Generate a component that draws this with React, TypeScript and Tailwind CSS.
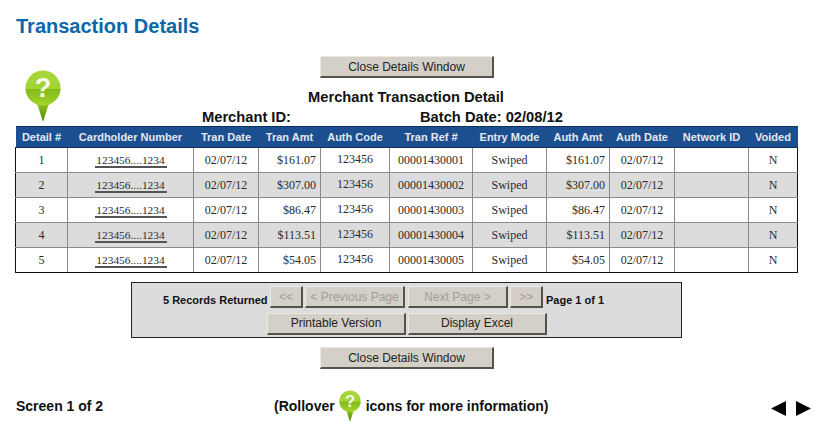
import React from 'react';

const rows = [
  { id: 1, ref: '00001430001', amt: '$161.07' },
  { id: 2, ref: '00001430002', amt: '$307.00' },
  { id: 3, ref: '00001430003', amt: '$86.47' },
  { id: 4, ref: '00001430004', amt: '$113.51' },
  { id: 5, ref: '00001430005', amt: '$54.05' },
];

const headers = ['Detail #', 'Cardholder Number', 'Tran Date', 'Tran Amt', 'Auth Code', 'Tran Ref #', 'Entry Mode', 'Auth Amt', 'Auth Date', 'Network ID', 'Voided'];
const widths = [52, 126, 65, 62, 69, 83, 74, 63, 65, 74, 49];

const Pin = ({ id, className }: { id: string; className: string }) => (
  <svg viewBox="0 0 36 52" className={className}>
    <defs>
      <linearGradient id={`${id}-top`} x1="0" y1="0" x2="0" y2="1">
        <stop offset="0" stopColor="#a8d83c" />
        <stop offset="1" stopColor="#9ccf2c" />
      </linearGradient>
      <linearGradient id={`${id}-bot`} x1="0" y1="0" x2="0" y2="1">
        <stop offset="0" stopColor="#5f9c08" />
        <stop offset="1" stopColor="#a2d42a" />
      </linearGradient>
      <linearGradient id={`${id}-tip`} x1="0" y1="0" x2="0" y2="1">
        <stop offset="0" stopColor="#8cc41c" />
        <stop offset="1" stopColor="#4f8a06" />
      </linearGradient>
      <clipPath id={`${id}-clip`}>
        <rect x="0" y="19" width="36" height="17" />
      </clipPath>
    </defs>
    <path d="M12 33 L18 52 L24 33 Z" fill={`url(#${id}-tip)`} />
    <circle cx="18" cy="18" r="17.5" fill={`url(#${id}-top)`} />
    <circle cx="18" cy="18" r="17.5" fill={`url(#${id}-bot)`} clipPath={`url(#${id}-clip)`} />
    <text x="18" y="27" textAnchor="middle" fontSize="27" fontWeight="700" fill="#f6f9ec" fontFamily="'Liberation Sans', sans-serif">?</text>
  </svg>
);

const Btn = ({ children, disabled, className }: { children: React.ReactNode; disabled?: boolean; className: string }) => (
  <div
    className={`flex items-center justify-center h-[22px] bg-[#d4d0c8] border-t border-l border-t-[#ece9e2] border-l-[#ece9e2] border-r-2 border-b-2 border-r-[#55534e] border-b-[#55534e] text-[12px] ${disabled ? 'text-[#a09e98]' : 'text-[#222222]'} ${className}`}
  >
    {children}
  </div>
);

const cell = 'border border-[#8a8a8a] p-0';

export default function App() {
  return (
    <div className="relative w-[830px] h-[422px] overflow-hidden bg-white font-['Liberation_Sans',sans-serif] text-[#111111]">
      <Pin id="pin-a" className="absolute left-[25px] top-[70px] w-[36px] h-[52px]" />

      <h1 className="pl-[16px] pt-[14px] text-[20px] leading-[24px] font-bold text-[#0b67a8]">Transaction Details</h1>

      <div className="flex justify-center mt-[18px] w-[814px]">
        <Btn className="w-[174px]">Close Details Window</Btn>
      </div>

      <div className="mt-[11px] w-[812px] text-center text-[14.7px] leading-[16px] font-bold">Merchant Transaction Detail</div>
      <div className="flex pl-[202px] mt-[4px] text-[14.7px] leading-[16px] font-bold">
        <span className="w-[218px]">Merchant ID:</span>
        <span>Batch Date: 02/08/12</span>
      </div>

      <div className="pl-[16px] mt-[1px]">
        <table className="-ml-px table-fixed border-collapse w-[782px] font-['Liberation_Serif',serif] text-[12px] text-[#2a2a2a]">
          <colgroup>
            {widths.map((w, i) => (
              <col key={i} style={{ width: w }} />
            ))}
          </colgroup>
          <thead>
            <tr className="h-[21px] bg-[#1c4f8f]">
              {headers.map((h) => (
                <th key={h} className="border border-[#10305c] p-0 border-x-0 font-['Liberation_Sans',sans-serif] text-[11px] font-bold text-[#e4e8f0] whitespace-nowrap">
                  {h}
                </th>
              ))}
            </tr>
          </thead>
          <tbody>
            {rows.map((r) => (
              <tr key={r.id} className={`h-[25px] ${r.id % 2 === 0 ? 'bg-[#dcdcdc]' : 'bg-white'} ${r.id === 5 ? '[&>td]:border-b-[#111111]' : ''}`}>
                <td className={`${cell} border-l-[#111111] text-center`}>{r.id}</td>
                <td className={`${cell} text-center`}>
                  <span className="inline-block w-[72px] text-[11.4px] leading-[12px] border-b-2 border-[#555555]">123456....1234</span>
                </td>
                <td className={`${cell} text-center`}>02/07/12</td>
                <td className={`${cell} pr-[4px] text-right`}>{r.amt}</td>
                <td className={`${cell} pb-[3px] text-center`}>123456</td>
                <td className={`${cell} text-center`}>{r.ref}</td>
                <td className={`${cell} text-center`}>Swiped</td>
                <td className={`${cell} pr-[4px] text-right`}>{r.amt}</td>
                <td className={`${cell} text-center`}>02/07/12</td>
                <td className={cell}></td>
                <td className={`${cell} border-r-[#111111] text-center`}>N</td>
              </tr>
            ))}
          </tbody>
        </table>
      </div>

      <div className="ml-[131px] mt-[9px] w-[551px] h-[56px] border border-[#222222] bg-[#dcdcdc] pt-[3px]">
        <div className="flex items-center gap-[2px] pl-[31px]">
          <span className="w-[105px] mt-[6px] text-[11px] font-bold whitespace-nowrap">5 Records Returned</span>
          <Btn disabled className="w-[33px]">&lt;&lt;</Btn>
          <Btn disabled className="w-[100px]">&lt; Previous Page</Btn>
          <Btn disabled className="w-[100px] ml-[1px]">Next Page &gt;</Btn>
          <Btn disabled className="w-[33px]">&gt;&gt;</Btn>
          <span className="ml-[1px] mt-[6px] text-[11px] font-bold whitespace-nowrap">Page 1 of 1</span>
        </div>
        <div className="flex gap-[2px] pl-[135px] mt-[4px]">
          <Btn className="w-[139px]">Printable Version</Btn>
          <Btn className="w-[139px]">Display Excel</Btn>
        </div>
      </div>

      <div className="flex justify-center mt-[9px] w-[814px]">
        <Btn className="w-[174px]">Close Details Window</Btn>
      </div>

      <div className="flex items-center pl-[16px] mt-[21px] h-[32px] text-[14px] font-bold">
        <span className="w-[258px]">Screen 1 of 2</span>
        <span>(Rollover</span>
        <Pin id="pin-b" className="w-[22px] h-[32px] ml-[4px] mr-[5px]" />
        <span>icons for more information)</span>
        <div className="ml-auto flex gap-[10px] pr-[19px] pt-[4px]">
          <svg width="15" height="15" viewBox="0 0 15 15"><path d="M15 0 V15 L0 7.5 Z" fill="#000" /></svg>
          <svg width="15" height="15" viewBox="0 0 15 15"><path d="M0 0 V15 L15 7.5 Z" fill="#000" /></svg>
        </div>
      </div>
    </div>
  );
}
